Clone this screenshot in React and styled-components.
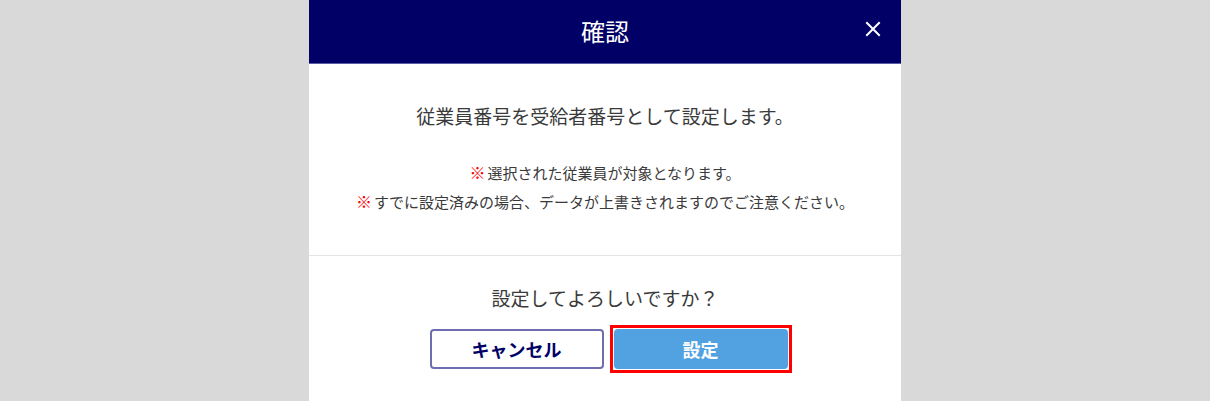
import React from 'react'
import styled, { createGlobalStyle } from 'styled-components'

const GlobalStyle = createGlobalStyle`
  html, body {
    margin: 0;
    padding: 0;
    background: #d9d9d9;
    font-family: "Noto Sans CJK JP", "Noto Sans", sans-serif;
  }
`

const Page = styled.div`
  height: 401px;
  overflow: hidden;
  display: flex;
  justify-content: center;
`

const Modal = styled.div`
  width: 592px;
  background: #fff;
  display: flex;
  flex-direction: column;
`

const Header = styled.div`
  position: relative;
  height: 63px;
  background: #000066;
  border-bottom: 1px solid #5c5ca8;
  display: flex;
  align-items: center;
  justify-content: center;
`

const Title = styled.h1`
  margin: 0 0 2px;
  color: #fff;
  font-size: 24px;
  font-weight: 400;
  line-height: 1;
`

const Close = styled.button`
  position: absolute;
  right: 19px;
  top: 20px;
  width: 18px;
  height: 18px;
  padding: 0;
  border: 0;
  background: transparent;
  cursor: pointer;
  display: flex;
`

const Body = styled.div`
  padding: 38px 0 39px;
  border-bottom: 1px solid #e4e4e4;
  text-align: center;
`

const Message = styled.p`
  margin: 0;
  font-size: 19px;
  line-height: 28px;
  color: #3a3a3a;
`

const Notes = styled.div`
  margin-top: 28px;
`

const Note = styled.p`
  margin: 0;
  font-size: 15px;
  line-height: 29px;
  color: #3a3a3a;
`

const Mark = styled.span`
  color: #ff0000;
  font-weight: 700;
  font-size: 16px;
  margin-right: 2px;
`

const Footer = styled.div`
  padding-top: 28px;
  display: flex;
  flex-direction: column;
  align-items: center;
`

const Question = styled.p`
  margin: 0;
  font-size: 19px;
  line-height: 28px;
  color: #3a3a3a;
`

const Buttons = styled.div`
  margin-top: 17px;
  padding-left: 7px;
  display: flex;
  gap: 10px;
`

/* red annotation frame around the focused button */
const Highlight = styled.span`
  display: flex;
  margin: -4px;
  padding: 1px;
  border: 3px solid #ff0000;
  background: #fff;
`

const Button = styled.button`
  width: 174px;
  height: 40px;
  border-radius: 4px;
  font-family: inherit;
  font-size: 18px;
  font-weight: 700;
  cursor: pointer;
  border: ${p => (p.$primary ? '0' : '2px solid #6d6daf')};
  background: ${p => (p.$primary ? '#52a1e0' : '#fff')};
  color: ${p => (p.$primary ? '#fff' : '#000066')};
`

const App = () => {
  return (
    <>
      <GlobalStyle />
      <Page>
        <Modal>
          <Header>
            <Title>確認</Title>
            <Close aria-label="閉じる">
              <svg width="18" height="18" viewBox="0 0 18 18">
                <path d="M3 3 L15 15 M15 3 L3 15" stroke="#fff" strokeWidth="2" strokeLinecap="square" />
              </svg>
            </Close>
          </Header>
          <Body>
            <Message>従業員番号を受給者番号として設定します。</Message>
            <Notes>
              <Note><Mark>※</Mark>選択された従業員が対象となります。</Note>
              <Note><Mark>※</Mark>すでに設定済みの場合、データが上書きされますのでご注意ください。</Note>
            </Notes>
          </Body>
          <Footer>
            <Question>設定してよろしいですか？</Question>
            <Buttons>
              <Button>キャンセル</Button>
              <Highlight>
                <Button $primary>設定</Button>
              </Highlight>
            </Buttons>
          </Footer>
        </Modal>
      </Page>
    </>
  )
}

export default App
